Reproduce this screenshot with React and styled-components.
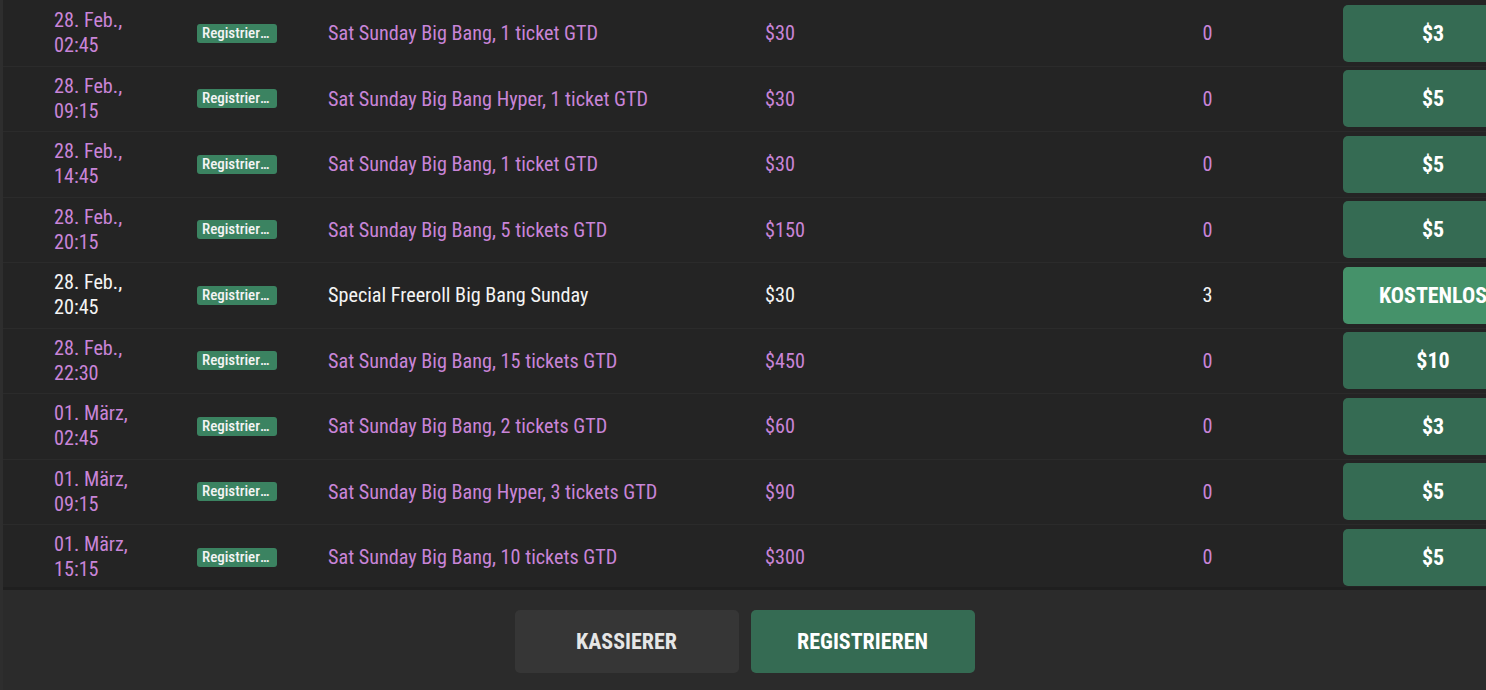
import styled, { createGlobalStyle } from "styled-components"

const GlobalStyle = createGlobalStyle`
  html, body {
    margin: 0;
    padding: 0;
    background: #242424;
    overflow: hidden;
  }
  * { box-sizing: border-box; }
`

const FONT = `"Roboto Condensed", "Liberation Sans Narrow", "DejaVu Sans Condensed", Roboto, sans-serif`

const Page = styled.div`
  width: 1486px;
  height: 690px;
  display: flex;
  flex-direction: column;
  font-family: ${FONT};
  border-left: 3px solid #2e2e2e;
  overflow: hidden;
`

const Table = styled.div`
  height: 590px;
  flex-shrink: 0;
  display: flex;
  flex-direction: column;
  background: #242424;
  border-bottom: 3px solid #1f1f1f;
  overflow: hidden;
`

const Row = styled.div`
  flex-shrink: 0;
  display: grid;
  grid-template-columns: 143px 131px 437px 400px 85px 93px 160px;
  align-items: center;
  height: 65.5px;
  padding-left: 51px;
  border-top: 1px solid ${p => (p.$first ? "transparent" : "#2b2b2b")};
  color: ${p => (p.$free ? "#f4f4f4" : "#c985d8")};
  font-size: 20.2px;
  font-weight: 400;
`

const DateCell = styled.div`
  line-height: 25px;
`

const Badge = styled.span`
  justify-self: start;
  background: #3b8361;
  color: #f4f4f4;
  font-size: 15px;
  font-weight: 500;
  line-height: 15px;
  padding: 2px 4px 2px 5px;
  border-radius: 3px;
  width: 80px;
  white-space: nowrap;
  overflow: hidden;
  text-overflow: ellipsis;
`

const Name = styled.div`
  white-space: nowrap;
`

const Price = styled.div``

const Count = styled.div`
  text-align: center;
`

const BuyIn = styled.button`
  grid-column: 7;
  height: 57px;
  width: 180px;
  border: none;
  border-radius: 5px;
  background: ${p => (p.$free ? "#45926a" : "#356b53")};
  color: #ffffff;
  font-family: ${FONT};
  font-weight: 700;
  font-size: 22px;
  text-align: center;
  padding: 0;
  white-space: nowrap;
`

const Footer = styled.div`
  flex: 1;
  background: #2b2b2b;
  display: flex;
  justify-content: center;
  align-items: flex-start;
  gap: 12px;
  padding-top: 20px;
`

const ActionButton = styled.button`
  width: 224px;
  height: 63px;
  border: none;
  border-radius: 5px;
  background: ${p => (p.$primary ? "#356b53" : "#363636")};
  color: ${p => (p.$primary ? "#ffffff" : "#e6e6e6")};
  font-family: ${FONT};
  font-weight: 700;
  font-size: 22px;
  text-transform: uppercase;
`

const rows = [
  { d: "28. Feb.,", t: "02:45", name: "Sat Sunday Big Bang, 1 ticket GTD", price: "$30", n: 0, buy: "$3" },
  { d: "28. Feb.,", t: "09:15", name: "Sat Sunday Big Bang Hyper, 1 ticket GTD", price: "$30", n: 0, buy: "$5" },
  { d: "28. Feb.,", t: "14:45", name: "Sat Sunday Big Bang, 1 ticket GTD", price: "$30", n: 0, buy: "$5" },
  { d: "28. Feb.,", t: "20:15", name: "Sat Sunday Big Bang, 5 tickets GTD", price: "$150", n: 0, buy: "$5" },
  { d: "28. Feb.,", t: "20:45", name: "Special Freeroll Big Bang Sunday", price: "$30", n: 3, buy: "KOSTENLOS", free: true },
  { d: "28. Feb.,", t: "22:30", name: "Sat Sunday Big Bang, 15 tickets GTD", price: "$450", n: 0, buy: "$10" },
  { d: "01. März,", t: "02:45", name: "Sat Sunday Big Bang, 2 tickets GTD", price: "$60", n: 0, buy: "$3" },
  { d: "01. März,", t: "09:15", name: "Sat Sunday Big Bang Hyper, 3 tickets GTD", price: "$90", n: 0, buy: "$5" },
  { d: "01. März,", t: "15:15", name: "Sat Sunday Big Bang, 10 tickets GTD", price: "$300", n: 0, buy: "$5" },
]

export default function App() {
  return (
    <>
      <GlobalStyle />
      <Page>
        <Table>
          {rows.map((r, i) => (
            <Row key={i} $first={i === 0} $free={r.free}>
              <DateCell>
                {r.d}
                <br />
                {r.t}
              </DateCell>
              <Badge>Registrieren</Badge>
              <Name>{r.name}</Name>
              <Price>{r.price}</Price>
              <Count>{r.n}</Count>
              <BuyIn $free={r.free}>{r.buy}</BuyIn>
            </Row>
          ))}
        </Table>
        <Footer>
          <ActionButton>Kassierer</ActionButton>
          <ActionButton $primary>Registrieren</ActionButton>
        </Footer>
      </Page>
    </>
  )
}
